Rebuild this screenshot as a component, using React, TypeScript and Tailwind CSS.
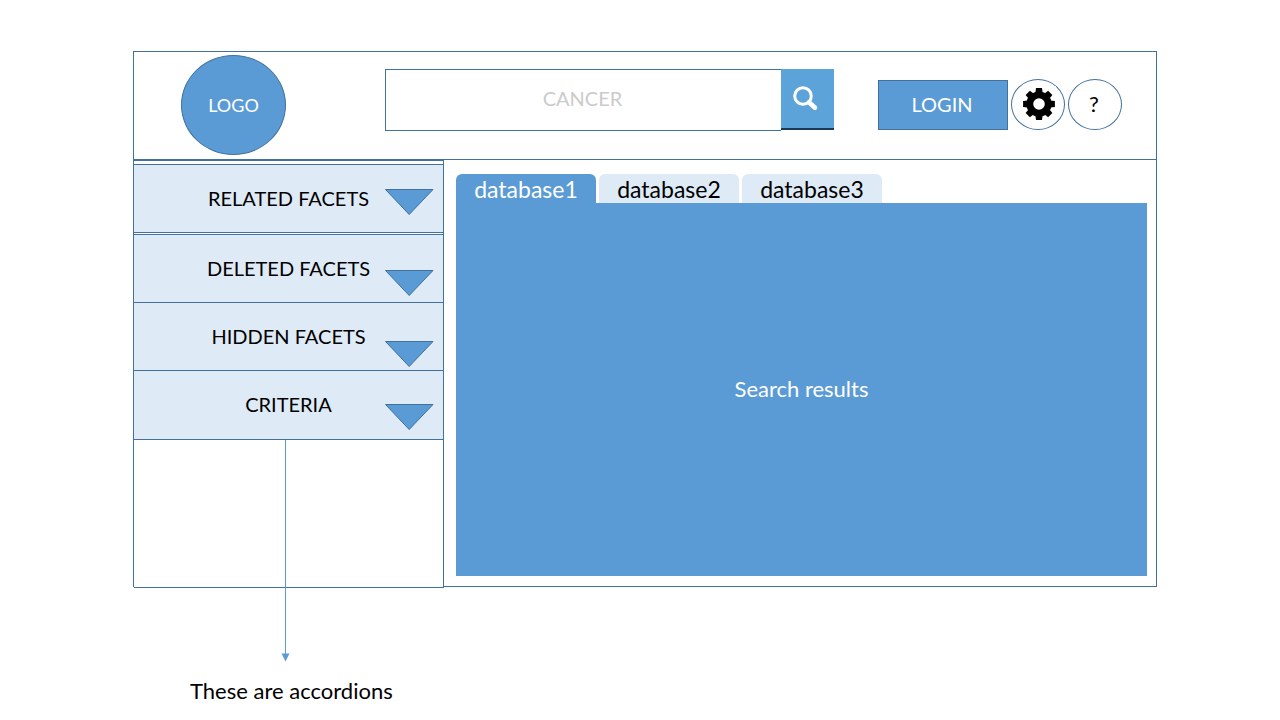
const facets = [
  { label: "RELATED FACETS", row: "h-[69px] border-y mb-px", arrow: "mt-[23px]" },
  { label: "DELETED FACETS", row: "h-[68px] border-t", arrow: "mt-[34px]" },
  { label: "HIDDEN FACETS", row: "h-[68px] border-t", arrow: "mt-[37px]" },
  { label: "CRITERIA", row: "h-[70px] border-y", arrow: "mt-8" },
];

const tabs = ["database1", "database2", "database3"];

function SearchIcon() {
  return (
    <svg width="26" height="26" viewBox="0 0 26 26" fill="none" stroke="#fff" aria-hidden="true">
      <circle cx="10" cy="10" r="8.3" strokeWidth="3" />
      <path d="M16 16.2L22 21.8" strokeWidth="4.6" strokeLinecap="round" />
    </svg>
  );
}

function GearIcon() {
  const angles = [0, 45, 90, 135, 180, 225, 270, 315];
  return (
    <svg width="32" height="32" viewBox="-16 -16 32 32" aria-hidden="true">
      <circle r="9.2" fill="none" stroke="#000" strokeWidth="6.8" />
      {angles.map((a) => (
        <path key={a} d="M-3.6 -11L-3 -15.9H3L3.6 -11Z" transform={`rotate(${a})`} />
      ))}
    </svg>
  );
}

function DownTriangle({ className }: { className: string }) {
  return (
    <svg
      width="50"
      height="28"
      viewBox="0 0 50 28"
      className={`mr-[9px] self-start justify-self-end ${className}`}
      aria-hidden="true"
    >
      <path d="M1.5 1.5H49L25.2 26.5Z" fill="#5b9bd5" stroke="#41719c" />
    </svg>
  );
}

export default function App() {
  return (
    <div className="min-h-screen bg-white pt-[51px] pr-[123px] pl-[133px] font-['Lato',sans-serif] text-[22px] leading-7 text-black">
      <div className="border border-[#41719c]">
        <header className="flex h-[108px] items-center border-b border-[#41719c] pr-[34px] pb-0.5 pl-[47px] text-[20px]">
          <div className="flex h-[100px] w-[105px] shrink-0 items-center justify-center rounded-[50%] border border-[#41719c] bg-[#5b9bd5] text-[18px] text-white">
            LOGO
          </div>
          <form className="mt-[17px] mr-11 ml-[99px] flex flex-1 items-start self-start" onSubmit={(e) => e.preventDefault()}>
            <input
              type="text"
              aria-label="Search"
              placeholder="CANCER"
              className="h-[62px] min-w-0 flex-1 border border-r-0 border-[#41719c] bg-white pr-0.5 pb-1 text-center outline-none placeholder:text-[#cbcbcb] placeholder:opacity-100"
            />
            <button
              type="submit"
              aria-label="Run search"
              className="flex h-[61px] w-[53px] items-center justify-center border-b-2 border-[#17395a] bg-[#5ba3d9] pr-1"
            >
              <SearchIcon />
            </button>
          </form>
          <button type="button" className="h-[50px] w-[130px] border border-[#41719c] bg-[#5b9bd5] pr-0.5 pb-0.5 text-white">
            LOGIN
          </button>
          <button
            type="button"
            aria-label="Settings"
            className="relative ml-[3px] flex h-[51px] w-[54px] items-center justify-center rounded-[50%] border border-[#41719c] bg-white pb-0.5 pl-0.5"
          >
            <GearIcon />
            <span className="absolute top-1.5 right-2 size-1 bg-white" />
          </button>
          <button
            type="button"
            aria-label="Help"
            className="ml-[3px] h-[51px] w-[54px] rounded-[50%] border border-[#41719c] bg-white pr-0.5 pb-0.5 text-[22px]"
          >
            ?
          </button>
        </header>

        <div className="flex">
          <aside className="relative -mb-[2px] h-[428px] w-[310px] shrink-0 border-y border-r border-[#41719c] bg-white pt-[3px]">
            {facets.map((f) => (
              <button
                key={f.label}
                type="button"
                aria-expanded={false}
                className={`grid w-full grid-cols-[1fr_auto_1fr] items-center border-[#41719c] bg-[#deeaf6] text-[20px] ${f.row}`}
              >
                <span className="col-start-2 pb-0.5">{f.label}</span>
                <DownTriangle className={f.arrow} />
              </button>
            ))}
            <svg width="10" height="222" viewBox="0 0 10 222" className="absolute top-[279px] left-[147px]" aria-hidden="true">
              <path d="M4.5 0V215" stroke="#5b9bd5" fill="none" />
              <path d="M0.5 213.5H8.5L4.5 221.5Z" fill="#5b9bd5" />
            </svg>
          </aside>

          <main className="flex flex-1 flex-col pt-[14px] pr-[9px] pb-[10px] pl-3">
            <div role="tablist" className="flex gap-[3px] text-[23px]">
              {tabs.map((t, i) => (
                <button
                  key={t}
                  type="button"
                  role="tab"
                  aria-selected={i === 0}
                  className={`h-[29px] w-[140px] rounded-t-md ${i === 0 ? "bg-[#5b9bd5] text-white" : "bg-[#deeaf6]"}`}
                >
                  {t}
                </button>
              ))}
            </div>
            <section role="tabpanel" className="flex flex-1 items-center justify-center bg-[#5b9bd5] pb-0.5 text-white">
              Search results
            </section>
          </main>
        </div>
      </div>
      <p className="mt-[90px] ml-[57px]">These are accordions</p>
    </div>
  );
}
